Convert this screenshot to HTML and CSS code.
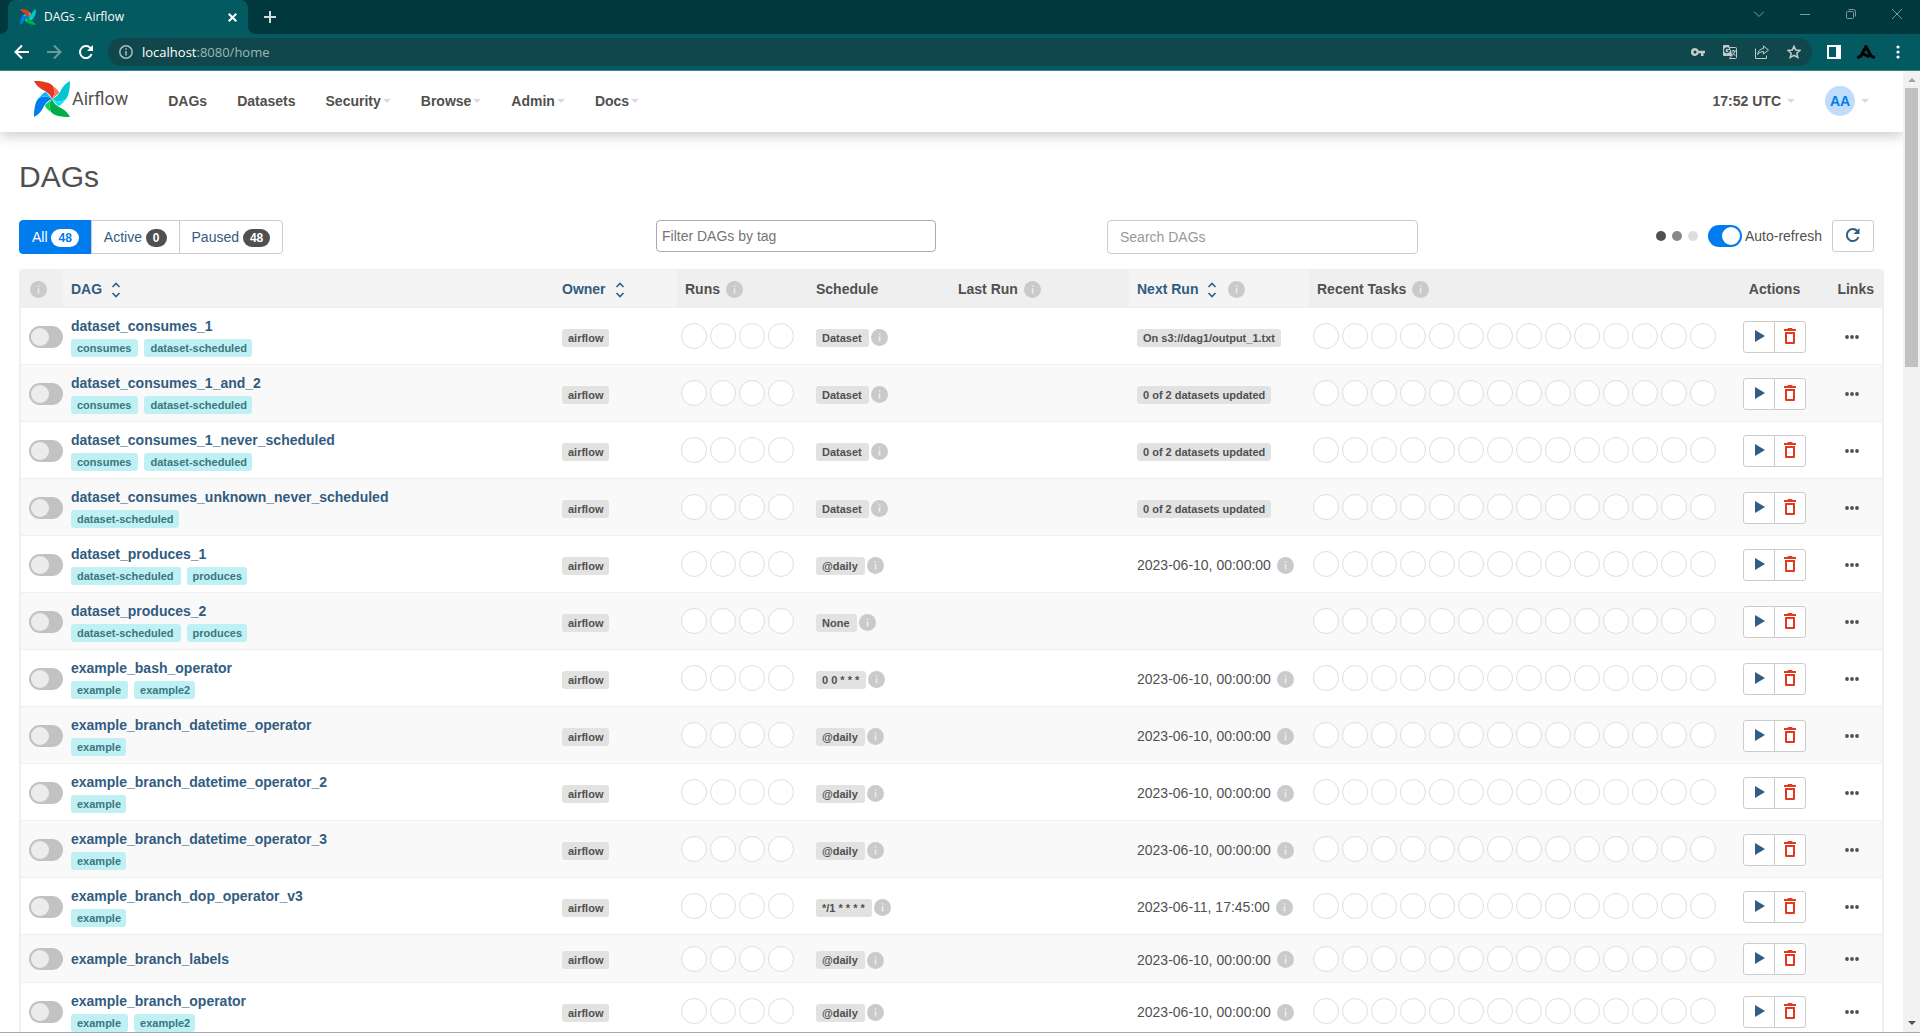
FILE: index.html
```html
<!DOCTYPE html>
<html lang="en">
<head>
    <meta charset="utf-8">
    <meta name="viewport" content="width=device-width, initial-scale=1.0">
    <title>DAGs - Airflow</title>
    <link rel="stylesheet" href="styles.css">
</head>
<body>
    <!-- Shared icons -->
    <svg class="sprite" aria-hidden="true">
        <symbol id="pinwheel" viewBox="0 0 36 36">
            <path fill="#00ad46" d="M36 36C26 36 19 34 17 31C15 26 15 23 18 18C20 23 23 25 27 27C31 29 34 32 36 36z"/>
            <path fill="#04d659" d="M17 31C13 28 11 26 11 24L18 18C15 23 15 26 17 31z"/>
            <path fill="#017cee" d="M0 36C0 26 2 19 5 17C10 15 13 15 18 18C13 20 11 23 9 27C7 31 4 34 0 36z"/>
            <path fill="#0cb6ff" d="M5 17C8 13 10 11 12 11L18 18C13 15 10 15 5 17z"/>
            <path fill="#e43921" d="M0 0C10 0 17 2 19 5C21 10 21 13 18 18C16 13 13 11 9 9C5 7 2 4 0 0z"/>
            <path fill="#ff7557" d="M19 5C23 8 25 10 25 12L18 18C21 13 21 10 19 5z"/>
            <path fill="#00c7d4" d="M36 0C36 10 34 17 31 19C26 21 23 21 18 18C23 16 25 13 27 9C29 5 32 2 36 0z"/>
            <path fill="#11e1ee" d="M31 19C28 23 26 25 24 25L18 18C23 21 26 21 31 19z"/>
        </symbol>
        <symbol id="info" viewBox="0 0 17 17">
            <circle cx="8.5" cy="8.5" r="8.5" fill="#cacaca"/>
            <path fill="#eee" d="M7.8 4.3h1.5v1.5H7.8zM7.8 7.2h1.5v5.4H7.8z"/>
        </symbol>
        <symbol id="sort" viewBox="0 0 10 16">
            <path fill="none" stroke="currentColor" stroke-width="1.6" d="M1.500 5L5 1.500L8.500 5M1.500 11L5 14.500L8.500 11"/>
        </symbol>
        <symbol id="play" viewBox="0 0 12 12">
            <path fill="#325c81" d="M2 0v12l10-6z"/>
        </symbol>
        <symbol id="trash" viewBox="0 0 12 16">
            <path fill="#e43921" d="M3.7 0h4.6v1H12v2H0V1h3.700zM1 4h10v10.500c0 1-.5 1.500-1.500 1.500h-7C1.500 16 1 15.500 1 14.500zM3 6v8h6V6z"/>
        </symbol>
        <symbol id="dots" viewBox="0 0 14 4">
            <g fill="#51504f"><circle cx="2" cy="2" r="1.900"/><circle cx="7" cy="2" r="1.900"/><circle cx="12" cy="2" r="1.900"/></g>
        </symbol>
    </svg>

    <header class="browser">
        <div class="tab-strip">
            <div class="tab">
                <svg class="tab-icon"><use href="#pinwheel"/></svg>
                <span class="tab-title">DAGs - Airflow</span>
                <button class="icon-btn tab-close" aria-label="Close tab">
                    <svg width="9" height="9" viewBox="0 0 9 9"><path d="M.7.700L8.300 8.300M8.300.700L.7 8.300"/></svg>
                </button>
            </div>
            <button class="icon-btn new-tab" aria-label="New tab">
                <svg width="12" height="12" viewBox="0 0 12 12"><path d="M6 0v12M0 6h12"/></svg>
            </button>
            <div class="window-controls">
                <button class="icon-btn" aria-label="Search tabs">
                    <svg width="10" height="10" viewBox="0 0 10 10"><path d="M0 2.500l5 5 5-5"/></svg>
                </button>
                <button class="icon-btn" aria-label="Minimize">
                    <svg width="10" height="10" viewBox="0 0 10 10"><path d="M0 5.500h10"/></svg>
                </button>
                <button class="icon-btn" aria-label="Restore">
                    <svg width="10" height="10" viewBox="0 0 10 10"><rect x=".5" y="2.500" width="7" height="7" rx="1"/><path d="M2.500.500h5a2 2 0 0 1 2 2v5"/></svg>
                </button>
                <button class="icon-btn" aria-label="Close">
                    <svg width="10" height="10" viewBox="0 0 10 10"><path d="M0 0l10 10M10 0L0 10"/></svg>
                </button>
            </div>
        </div>
        <div class="toolbar">
            <button class="icon-btn" aria-label="Back">
                <svg width="16" height="16" viewBox="0 0 16 16"><path d="M15 8H2M8 1.500L1.500 8 8 14.500"/></svg>
            </button>
            <button class="icon-btn disabled" aria-label="Forward" disabled>
                <svg width="16" height="16" viewBox="0 0 16 16"><path d="M1 8H14M8 1.500L14.500 8 8 14.500"/></svg>
            </button>
            <button class="icon-btn" aria-label="Reload">
                <svg width="16" height="16" viewBox="0 0 16 16"><path d="M13.600 10.200A6 6 0 1 1 12.200 3.800L14 5.500"/><path class="solid" d="M15 1v6H9z"/></svg>
            </button>
            <div class="omnibox">
                <svg class="site-info" width="14" height="14" viewBox="0 0 14 14"><circle cx="7" cy="7" r="6.200"/><path d="M7 6v4.500M7 3.200v1.600"/></svg>
                <span class="url"><b>localhost</b>:8080/home</span>
                <div class="omnibox-actions">
                    <button class="icon-btn" aria-label="Passwords">
                        <svg width="14" height="14" viewBox="0 0 14 14"><path class="solid" fill-rule="evenodd" d="M4 3a4 4 0 1 0 3.700 5.300H10V11h2.500V8.300H14V5.700H7.700A4 4 0 0 0 4 3zm0 2.500a1.500 1.500 0 1 1 0 3 1.500 1.500 0 0 1 0-3z"/></svg>
                    </button>
                    <button class="icon-btn" aria-label="Translate">
                        <svg width="14" height="14" viewBox="0 0 14 14"><path class="solid" fill-rule="evenodd" d="M0 1q0-1 1-1h5l3.500 11H1q-1 0-1-1zM6.900 5H4.500v1.200h1.200A1.600 1.600 0 1 1 5.300 4.300l.9-.9A3 3 0 1 0 6.900 5z"/><path class="thin" d="M7 2.500h5.500q1 0 1 1v9q0 1-1 1h-6l2-2.500M8.500 6h4.500M10.500 5v1M12 6q-.5 2.500-3 4.500M9.500 7.500q1 2 3 3"/></svg>
                    </button>
                    <button class="icon-btn" aria-label="Share">
                        <svg width="16" height="14" viewBox="0 0 16 14"><path class="thin" d="M1.500 3.500v10h11V10.500M9.500 1l5 4-5 4V6.500Q5.500 6.500 3.500 9.500 4.500 4 9.500 3.500z"/></svg>
                    </button>
                    <button class="icon-btn" aria-label="Bookmark">
                        <svg width="14" height="14" viewBox="0 0 14 14"><path class="star" d="M7 1.200l1.700 3.900 4.300.4-3.200 2.800 1 4.200L7 10.300l-3.800 2.200 1-4.200L1 5.500l4.300-.4z"/></svg>
                    </button>
                </div>
            </div>
            <div class="extensions">
                <button class="icon-btn" aria-label="Side panel">
                    <svg width="14" height="14" viewBox="0 0 14 14"><path class="solid" fill-rule="evenodd" d="M0 0h14v14H0zM2 2v10h7V2z"/></svg>
                </button>
                <button class="icon-btn black" aria-label="Extension">
                    <svg width="18" height="16" viewBox="0 0 18 16"><path d="M1.500 13.200L4 12L9 2.500L14 12L16.500 13.200M5 9.500L11 12.200"/></svg>
                </button>
                <button class="icon-btn" aria-label="Browser menu">
                    <svg width="4" height="14" viewBox="0 0 4 14"><g class="solid"><circle cx="2" cy="2" r="1.600"/><circle cx="2" cy="7" r="1.600"/><circle cx="2" cy="12" r="1.600"/></g></svg>
                </button>
            </div>
        </div>
    </header>

    <div class="viewport">
        <div class="page">
            <nav class="navbar">
                <a class="brand" href="#home">
                    <svg class="brand-icon"><use href="#pinwheel"/></svg>
                    <span>Airflow</span>
                </a>
                <a href="#dags">DAGs</a>
                <a href="#datasets">Datasets</a>
                <a class="dropdown" href="#security">Security</a>
                <a class="dropdown" href="#browse">Browse</a>
                <a class="dropdown" href="#admin">Admin</a>
                <a class="dropdown" href="#docs">Docs</a>
                <a class="dropdown wide clock" href="#timezone">17:52 UTC</a>
                <a class="dropdown wide" href="#user"><span class="avatar">AA</span></a>
            </nav>

            <main>
                <h2>DAGs</h2>
                <div class="filters">
                    <div class="status-filter">
                        <a class="active" href="#all">All <span class="count">48</span></a>
                        <a href="#active">Active <span class="count">0</span></a>
                        <a href="#paused">Paused <span class="count">48</span></a>
                    </div>
                    <input class="tag-filter" type="text" placeholder="Filter DAGs by tag" aria-label="Filter DAGs by tag">
                    <input class="dag-search" type="search" placeholder="Search DAGs" aria-label="Search DAGs">
                    <div class="refresh">
                        <span class="loading"><i></i><i></i><i></i></span>
                        <input class="switch" type="checkbox" id="auto_refresh" checked>
                        <label for="auto_refresh">Auto-refresh</label>
                        <button class="refresh-btn" aria-label="Refresh">
                            <svg width="16" height="16" viewBox="0 0 16 16"><path d="M13.500 10A6 6 0 1 1 12.300 4"/><path class="solid" d="M14.500 1v6h-6z"/></svg>
                        </button>
                    </div>
                </div>

                <div class="table-wrap">
                    <table>
                        <thead>
                            <tr>
                                <th class="col-toggle"><svg class="info"><use href="#info"/></svg></th>
                                <th class="sortable"><a href="#sort-dag">DAG<svg class="sort"><use href="#sort"/></svg></a></th>
                                <th class="sortable col-owner"><a href="#sort-owner">Owner<svg class="sort"><use href="#sort"/></svg></a></th>
                                <th class="col-runs">Runs<svg class="info"><use href="#info"/></svg></th>
                                <th class="col-schedule">Schedule</th>
                                <th class="col-last">Last Run<svg class="info"><use href="#info"/></svg></th>
                                <th class="sortable col-next"><a href="#sort-next">Next Run<svg class="sort"><use href="#sort"/></svg></a><svg class="info"><use href="#info"/></svg></th>
                                <th class="col-tasks">Recent Tasks<svg class="info"><use href="#info"/></svg></th>
                                <th class="col-actions">Actions</th>
                                <th class="col-links">Links</th>
                            </tr>
                        </thead>
                        <tbody id="dags"></tbody>
                    </table>
                </div>
            </main>
        </div>
        <div class="scrollbar" aria-hidden="true">
            <span class="arrow up"></span>
            <span class="thumb"></span>
            <span class="arrow down"></span>
        </div>
    </div>

    <script src="script.js"></script>
</body>
</html>
```
FILE: styles.css
```css
* {
    box-sizing: border-box;
}

body {
    margin: 0;
    height: 100vh;
    display: flex;
    flex-direction: column;
    overflow: hidden;
    border-bottom: 1px solid #a8a8a8;
    font-family: "Liberation Sans", Arial, sans-serif;
    font-size: 14px;
    line-height: 20px;
    color: #51504f;
    background: #fff;
}

a {
    color: #325c81;
    text-decoration: none;
}

.sprite {
    display: none;
}

/* Browser chrome */
.browser {
    flex: none;
    background: #045a61;
    border-bottom: 1px solid #3d8186;
    color: #fff;
    font-family: "Open Sans", "Noto Sans", sans-serif;
}

.icon-btn {
    display: inline-flex;
    align-items: center;
    justify-content: center;
    width: 32px;
    height: 28px;
    padding: 0;
    border: none;
    background: none;
    color: inherit;
}

.icon-btn svg {
    fill: none;
    stroke: currentColor;
    stroke-width: 2;
}

.icon-btn .solid {
    fill: currentColor;
    stroke: none;
}

.icon-btn .thin {
    stroke-width: 1;
}

.icon-btn .star {
    stroke-width: 1.5;
}

.tab-strip {
    display: flex;
    height: 34px;
    padding-left: 8px;
    background: #01383d;
}

.tab {
    display: flex;
    align-items: center;
    width: 240px;
    padding: 0 6px 0 12px;
    border-radius: 8px 8px 0 0;
    background: #045a61;
    position: relative;
}

/* Flared bottom corners of the tab */
.tab::before,
.tab::after {
    content: "";
    position: absolute;
    bottom: 0;
    width: 8px;
    height: 8px;
}

.tab::before {
    right: 100%;
    background: radial-gradient(circle at 0 0, #01383d 8px, #045a61 8px);
}

.tab::after {
    left: 100%;
    background: radial-gradient(circle at 100% 0, #01383d 8px, #045a61 8px);
}

.tab-icon {
    width: 16px;
    height: 16px;
    margin-right: 8px;
}

.tab-title {
    flex: 1;
    font-size: 12px;
}

.tab-close {
    width: 20px;
}

.new-tab {
    width: 44px;
    height: 34px;
    color: #d0dcdd;
}

.window-controls {
    display: flex;
    margin-left: auto;
    color: #7f9a9d;
}

.window-controls .icon-btn {
    width: 46px;
}

.window-controls svg {
    stroke-width: 1;
}

.toolbar {
    display: flex;
    align-items: center;
    height: 36px;
    padding: 0 6px;
}

.disabled {
    color: #6a9a9e;
}

.omnibox {
    flex: 1;
    display: flex;
    align-items: center;
    height: 28px;
    margin: 0 6px;
    padding: 0 2px 0 11px;
    border-radius: 14px;
    background: #10474c;
}

.site-info {
    fill: none;
    stroke: #a9bdbf;
    stroke-width: 1.5;
}

.url {
    margin-left: 9px;
    font-size: 13px;
    color: #9fb6b8;
}

.url b {
    font-weight: 400;
    color: #fff;
}

.omnibox-actions {
    display: flex;
    margin-left: auto;
    color: #c3cbcc;
}

.extensions {
    display: flex;
}

.black {
    color: #000;
}

.black svg {
    stroke-width: 3;
    stroke-linecap: round;
    stroke-linejoin: round;
}

/* Page */
.viewport {
    flex: 1;
    display: flex;
    min-height: 0;
}

.page {
    flex: 1;
    min-width: 0;
    overflow: hidden;
}

.scrollbar {
    display: flex;
    flex-direction: column;
    align-items: center;
    width: 17px;
    background: #f1f1f1;
}

.arrow {
    width: 0;
    height: 0;
    border: 4px solid transparent;
}

.up {
    margin: 3px 0 6px;
    border-bottom-color: #a3a3a3;
}

.thumb {
    width: 13px;
    height: 29%;
    background: #c1c1c1;
}

.down {
    margin: auto 0 3px;
    border-top-color: #505050;
}

.navbar {
    display: flex;
    align-items: center;
    height: 61px;
    padding: 0 19px 1px;
    background: #fff;
    box-shadow: 0 4px 12px rgba(0, 0, 0, 0.2);
    font-weight: bold;
}

.navbar a {
    display: flex;
    align-items: center;
    padding: 0 15px;
    color: #51504f;
}

.navbar .brand {
    gap: 2px;
    margin-bottom: 4px;
    padding-right: 25px;
    font-family: Roboto, sans-serif;
    font-size: 18px;
    font-weight: 400;
}

.brand-icon {
    width: 36px;
    height: 36px;
}

.dropdown::after {
    content: "";
    margin-left: 2px;
    border: 4px solid transparent;
    border-top-color: #e4d3e6;
    border-bottom: 0;
}

.wide::after {
    margin-left: 6px;
}

.navbar .clock {
    margin-left: auto;
}

.avatar {
    width: 30px;
    height: 30px;
    border-radius: 50%;
    background: #bfddfb;
    color: #017cee;
    line-height: 30px;
    text-align: center;
}

main {
    padding: 0 19px;
}

h2 {
    margin: 28px 0 27px;
    font-size: 30px;
    line-height: 33px;
    font-weight: 400;
}

.filters {
    display: grid;
    grid-template-columns: 637fr 451fr 311fr 466fr;
    align-items: start;
    margin-bottom: 15px;
}

.status-filter {
    display: flex;
}

.status-filter a {
    padding: 6px 12px;
    border: 1px solid #ccc;
    margin-left: -1px;
}

.status-filter a:first-child {
    margin-left: 0;
    border-radius: 4px 0 0 4px;
}

.status-filter a:last-child {
    border-radius: 0 4px 4px 0;
}

.status-filter .active {
    background: #017cee;
    border-color: #017cee;
    color: #fff;
}

.count {
    display: inline-block;
    padding: 0 7px;
    border-radius: 10px;
    background: #51504f;
    color: #fff;
    font-size: 12px;
    font-weight: bold;
    line-height: 18px;
}

.active .count {
    background: #fff;
    color: #017cee;
}

.tag-filter,
.dag-search {
    border: 1px solid #ccc;
    border-radius: 4px;
    background: #fff;
    font: inherit;
    color: inherit;
}

.tag-filter {
    width: 62%;
    height: 32px;
    padding: 0 5px;
    border-color: #aaa;
}

.tag-filter::placeholder {
    color: #757575;
}

.dag-search {
    width: 100%;
    height: 34px;
    padding: 0 12px;
}

.dag-search::placeholder {
    color: #999;
}

.refresh {
    display: flex;
    align-items: center;
    justify-content: flex-end;
    padding-right: 10px;
}

.loading {
    display: flex;
    gap: 6px;
    margin-right: 10px;
}

.loading i {
    width: 10px;
    height: 10px;
    border-radius: 50%;
    background: #51504f;
}

.loading i:nth-child(2) {
    background: #888;
}

.loading i:nth-child(3) {
    background: #ddd;
}

.switch {
    appearance: none;
    display: block;
    width: 34px;
    height: 22px;
    margin: 0;
    padding: 2px;
    border-radius: 11px;
    background: #c4c2c1;
}

.switch::before {
    content: "";
    display: block;
    width: 18px;
    height: 18px;
    border-radius: 50%;
    background: #edecec;
}

.switch:checked {
    background: #017cee;
}

.switch:checked::before {
    margin-left: auto;
    background: #fff;
}

.refresh label {
    margin: 0 10px 0 3px;
}

.refresh-btn {
    display: flex;
    align-items: center;
    justify-content: center;
    width: 42px;
    height: 32px;
    padding: 0 0 2px;
    border: 1px solid #ccc;
    border-radius: 3px;
    background: #fff;
    color: #325c81;
}

.refresh-btn svg {
    fill: none;
    stroke: currentColor;
    stroke-width: 2;
}

.refresh-btn .solid {
    fill: currentColor;
    stroke: none;
}

/* DAG table */
.table-wrap {
    border: 2px solid #efefef;
    border-top-width: 1px;
    border-radius: 3px;
}

table {
    width: 100%;
    table-layout: fixed;
    border-spacing: 0;
}

th {
    height: 38px;
    padding: 0 8px 1px;
    background: #efefef;
    text-align: left;
    white-space: nowrap;
}

.sortable {
    padding-bottom: 0;
    background: #f4f4f4;
    border-bottom: 1px solid #efefef;
}

.col-toggle { width: 42px; }
.col-owner { width: 123px; }
.col-runs { width: 131px; }
.col-schedule { width: 142px; }
.col-last { width: 179px; }
.col-next { width: 180px; }
.col-tasks { width: 426px; }
.col-actions { width: 79px; }
.col-links { width: 68px; }

th.col-toggle {
    padding: 0 9px 1px;
}

th.col-actions {
    padding: 0;
    text-align: center;
}

th.col-links {
    padding-bottom: 0;
    text-align: right;
}

.info {
    width: 17px;
    height: 17px;
    vertical-align: middle;
}

th .info {
    margin-left: 6px;
}

.col-toggle .info {
    margin-left: 0;
}

.sort {
    width: 10px;
    height: 16px;
    margin: 0 5px 0 9px;
    vertical-align: middle;
}

td {
    padding: 8px 8px 7px;
    border-bottom: 1px solid #efefef;
    white-space: nowrap;
}

tbody tr:nth-child(even) {
    background: #f9f9f9;
}

.dag-id {
    display: block;
    font-weight: bold;
}

.tags {
    display: flex;
    gap: 6px;
    margin-top: 3px;
}

.tag,
.label {
    display: inline-block;
    padding: 0 6px;
    border-radius: 3px;
    background: #e2e2e2;
    color: #51504f;
    font-size: 11px;
    font-weight: bold;
    line-height: 18px;
    vertical-align: middle;
}

.tag {
    padding-right: 7px;
    background: #bff1f4;
    color: #3a777e;
}

.tag:last-child {
    padding-right: 5px;
}

.schedule {
    padding-right: 7px;
}

td .info {
    margin-left: 2px;
}

.next-date {
    margin-right: 4px;
    vertical-align: middle;
}

td.circles {
    padding: 0 4px;
}

.circles div {
    display: flex;
    gap: 3px;
}

.circles i {
    width: 26px;
    height: 26px;
    border: 1px solid #dedede;
    border-radius: 50%;
    background: #fff;
}

.btn-group {
    display: flex;
}

.btn-group button {
    display: flex;
    align-items: center;
    justify-content: center;
    width: 32px;
    height: 32px;
    padding: 0 0 2px;
    border: 1px solid #ccc;
    border-radius: 3px 0 0 3px;
    background: #fff;
}

.btn-group button + button {
    margin-left: -1px;
    border-radius: 0 3px 3px 0;
}

.btn-group svg {
    width: 12px;
    height: 12px;
}

.btn-group .trash {
    height: 16px;
}

.links a {
    display: flex;
    justify-content: center;
    width: 16px;
    margin-left: 22px;
}

.links svg {
    width: 14px;
    height: 4px;
}
```
FILE: script.js
```javascript
const dags = [
    { id: 'dataset_consumes_1', tags: ['consumes', 'dataset-scheduled'], schedule: 'Dataset', next: 'On s3://dag1/output_1.txt' },
    { id: 'dataset_consumes_1_and_2', tags: ['consumes', 'dataset-scheduled'], schedule: 'Dataset', next: '0 of 2 datasets updated' },
    { id: 'dataset_consumes_1_never_scheduled', tags: ['consumes', 'dataset-scheduled'], schedule: 'Dataset', next: '0 of 2 datasets updated' },
    { id: 'dataset_consumes_unknown_never_scheduled', tags: ['dataset-scheduled'], schedule: 'Dataset', next: '0 of 2 datasets updated' },
    { id: 'dataset_produces_1', tags: ['dataset-scheduled', 'produces'], schedule: '@daily', date: '2023-06-10, 00:00:00' },
    { id: 'dataset_produces_2', tags: ['dataset-scheduled', 'produces'], schedule: 'None' },
    { id: 'example_bash_operator', tags: ['example', 'example2'], schedule: '0 0 * * *', date: '2023-06-10, 00:00:00' },
    { id: 'example_branch_datetime_operator', tags: ['example'], schedule: '@daily', date: '2023-06-10, 00:00:00' },
    { id: 'example_branch_datetime_operator_2', tags: ['example'], schedule: '@daily', date: '2023-06-10, 00:00:00' },
    { id: 'example_branch_datetime_operator_3', tags: ['example'], schedule: '@daily', date: '2023-06-10, 00:00:00' },
    { id: 'example_branch_dop_operator_v3', tags: ['example'], schedule: '*/1 * * * *', date: '2023-06-11, 17:45:00' },
    { id: 'example_branch_labels', tags: [], schedule: '@daily', date: '2023-06-10, 00:00:00' },
    { id: 'example_branch_operator', tags: ['example', 'example2'], schedule: '@daily', date: '2023-06-10, 00:00:00' }
];

const info = '<svg class="info"><use href="#info"/></svg>';
const circles = (count) => `<div>${'<i></i>'.repeat(count)}</div>`;

function nextRun(dag) {
    if (dag.next) return `<a class="label" href="#datasets">${dag.next}</a>`;
    if (dag.date) return `<time class="next-date">${dag.date}</time>${info}`;
    return '';
}

function row(dag) {
    const tags = dag.tags.map((tag) => `<a class="tag" href="#tag-${tag}">${tag}</a>`).join('');
    return `
        <tr>
            <td><input class="switch" type="checkbox" aria-label="Unpause ${dag.id}"></td>
            <td>
                <a class="dag-id" href="#${dag.id}">${dag.id}</a>
                ${tags && `<div class="tags">${tags}</div>`}
            </td>
            <td><a class="label" href="#owner">airflow</a></td>
            <td class="circles">${circles(4)}</td>
            <td><a class="label schedule" href="#schedule">${dag.schedule}</a>${info}</td>
            <td></td>
            <td>${nextRun(dag)}</td>
            <td class="circles">${circles(14)}</td>
            <td>
                <div class="btn-group">
                    <button aria-label="Trigger DAG"><svg><use href="#play"/></svg></button>
                    <button aria-label="Delete DAG"><svg class="trash"><use href="#trash"/></svg></button>
                </div>
            </td>
            <td class="links"><a href="#links" aria-label="Links"><svg><use href="#dots"/></svg></a></td>
        </tr>`;
}

document.getElementById('dags').innerHTML = dags.map(row).join('');
```
